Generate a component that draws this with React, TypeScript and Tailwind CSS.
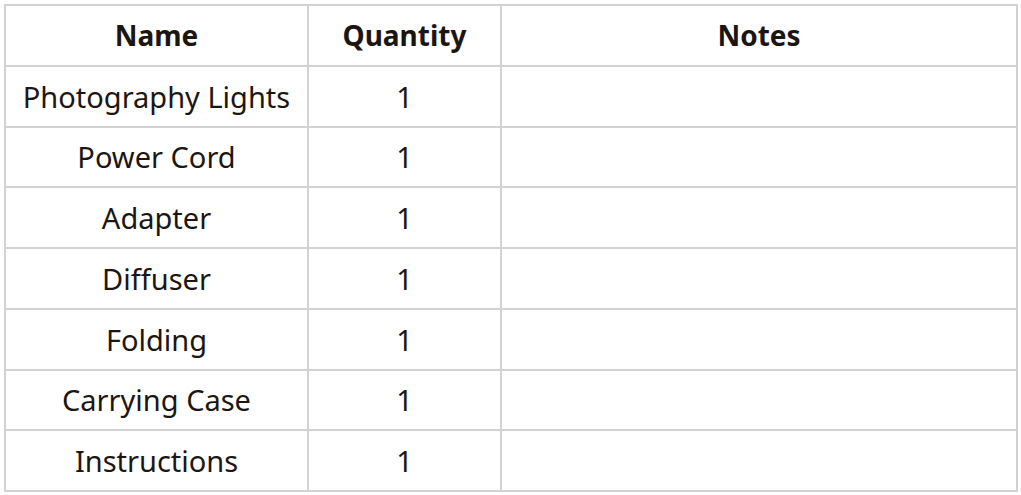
import React from 'react';

const items = [
  'Photography Lights',
  'Power Cord',
  'Adapter',
  'Diffuser',
  'Folding',
  'Carrying Case',
  'Instructions',
];

const App: React.FC = () => {
  return (
    <div className="bg-white min-h-screen pt-[4px] pl-[4px]" style={{ fontFamily: '"Noto Sans", "Open Sans", sans-serif' }}>
      <table className="border-collapse table-fixed w-[1012px] text-[#1c1613] leading-none">
        <colgroup>
          <col className="w-[303px]" />
          <col className="w-[193px]" />
          <col className="w-[516px]" />
        </colgroup>
        <thead>
          {/* header row */}
          <tr className="h-[60.75px] text-[28px]">
            <th className="border-2 border-[#d2d2d2] font-bold text-center">Name</th>
            <th className="border-2 border-[#d2d2d2] font-bold text-center">Quantity</th>
            <th className="border-2 border-[#d2d2d2] font-bold text-center">Notes</th>
          </tr>
        </thead>
        <tbody className="text-[29px]">
          {items.map((name) => (
            <tr key={name} className="h-[60.75px]">
              <td className="border-2 border-[#d2d2d2] text-center">{name}</td>
              <td className="border-2 border-[#d2d2d2] text-center">1</td>
              <td className="border-2 border-[#d2d2d2]"></td>
            </tr>
          ))}
        </tbody>
      </table>
    </div>
  );
};

export default App;
